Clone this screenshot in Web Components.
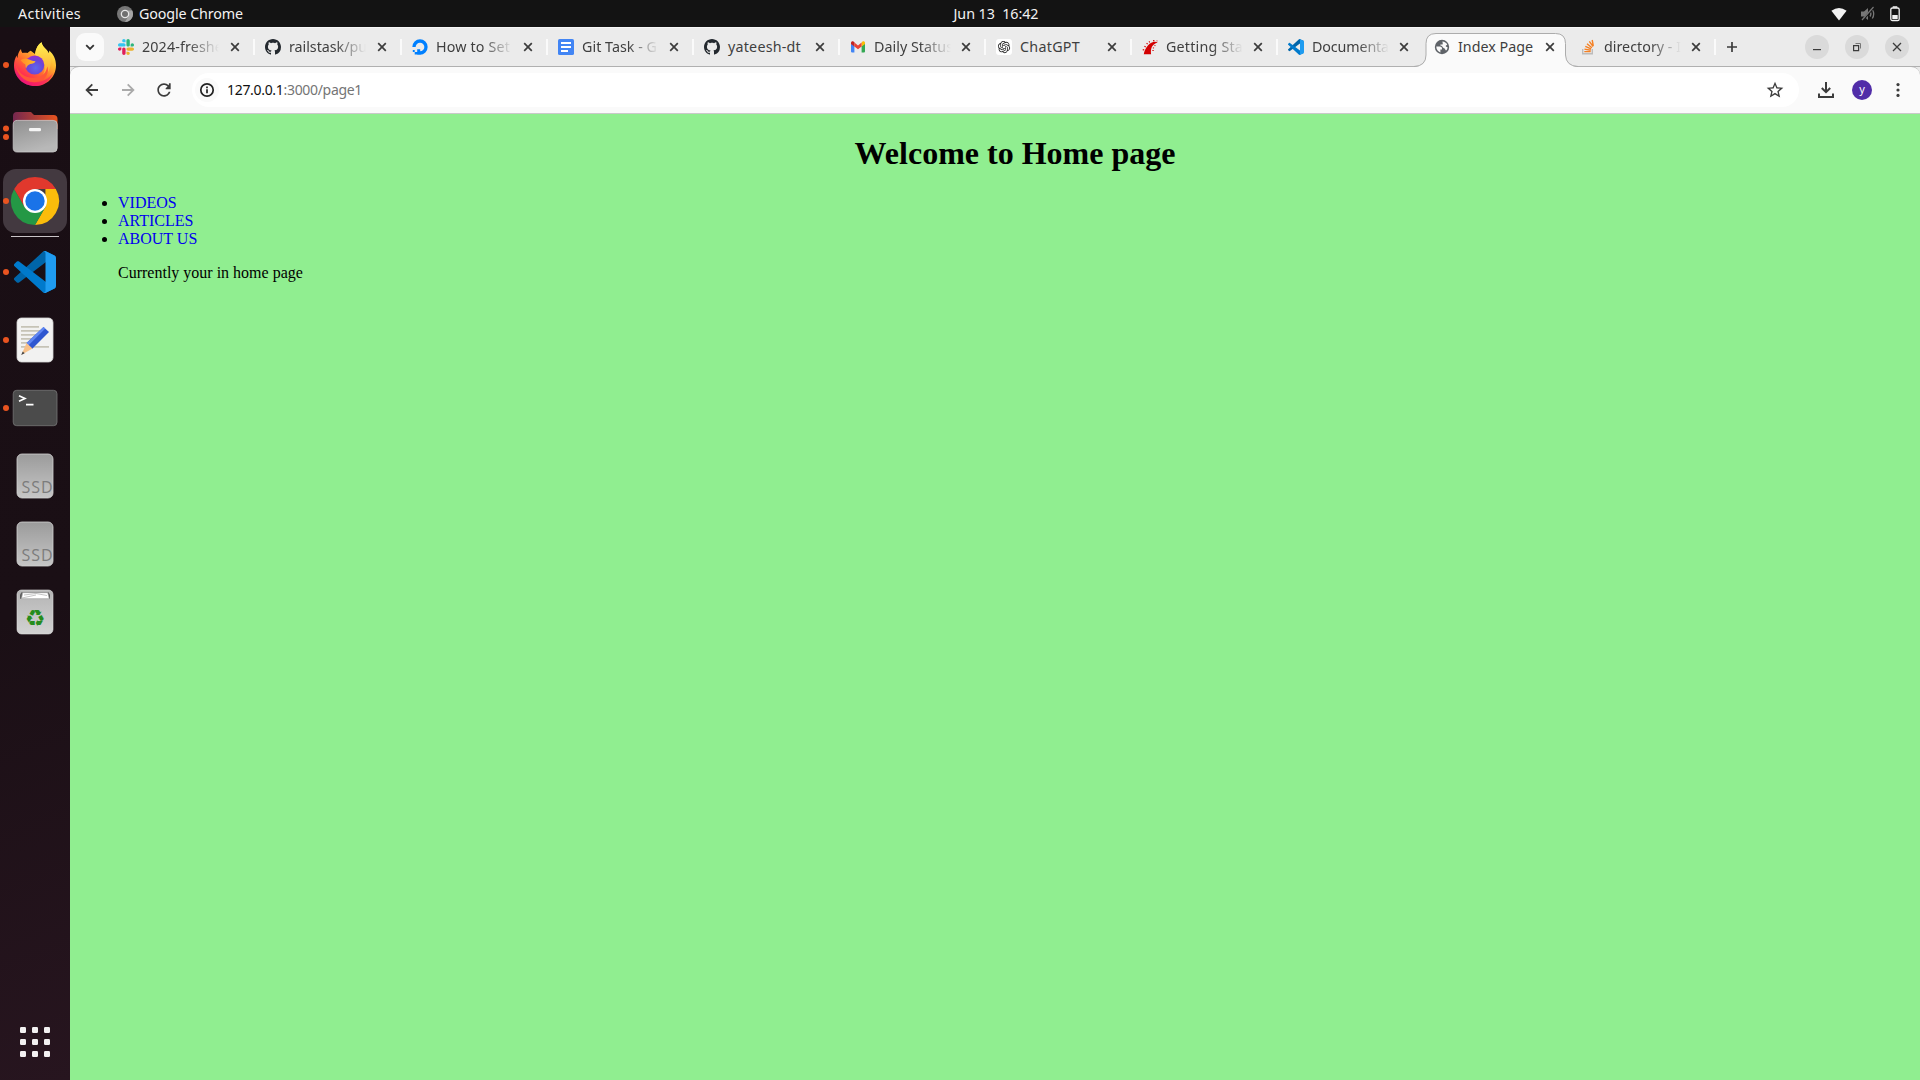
<!DOCTYPE html>
<html lang="en">
<head>
<meta charset="utf-8">
<title>Index Page</title>
<style>
html,body{margin:0;height:100%;overflow:hidden;background:#131313}
</style>
</head>
<body>
<desktop-shell></desktop-shell>
<script>
const UI = '"Noto Sans","Open Sans",sans-serif';

const FAV = {
slack:`<svg viewBox="0 0 122.8 122.8"><path fill="#e01e5a" d="M25.8 77.6c0 7.1-5.8 12.9-12.9 12.9S0 84.700 0 77.600s5.800-12.900 12.900-12.900h12.900v12.900zM32.300 77.600c0-7.100 5.800-12.900 12.900-12.900s12.900 5.800 12.900 12.900v32.300c0 7.100-5.800 12.900-12.900 12.900s-12.900-5.800-12.900-12.900V77.600z"/><path fill="#36c5f0" d="M45.200 25.800c-7.100 0-12.900-5.800-12.900-12.900S38.100 0 45.200 0s12.900 5.800 12.900 12.900v12.900H45.200zM45.200 32.300c7.100 0 12.900 5.800 12.900 12.900s-5.800 12.900-12.900 12.900H12.900C5.800 58.100 0 52.300 0 45.200s5.800-12.900 12.900-12.900h32.300z"/><path fill="#2eb67d" d="M97 45.200c0-7.100 5.800-12.900 12.900-12.900s12.900 5.800 12.900 12.900-5.800 12.900-12.900 12.900H97V45.200zM90.500 45.200c0 7.100-5.800 12.900-12.900 12.900s-12.900-5.800-12.900-12.900V12.900C64.700 5.800 70.500 0 77.600 0s12.900 5.800 12.900 12.900v32.300z"/><path fill="#ecb22e" d="M77.600 97c7.100 0 12.900 5.800 12.900 12.900s-5.800 12.900-12.900 12.900-12.900-5.800-12.900-12.900V97h12.900zM77.600 90.500c-7.100 0-12.900-5.800-12.900-12.900s5.800-12.900 12.900-12.900h32.300c7.100 0 12.900 5.800 12.900 12.900s-5.800 12.900-12.900 12.900H77.600z"/></svg>`,
github:`<svg viewBox="0 0 16 16"><path fill="#24292f" d="M8 0C3.58 0 0 3.58 0 8c0 3.54 2.29 6.53 5.47 7.59.4.07.55-.17.55-.38 0-.19-.01-.82-.01-1.490-2.010.37-2.530-.49-2.690-.94-.09-.23-.48-.94-.82-1.130-.28-.15-.68-.52-.01-.53.63-.01 1.080.58 1.230.82.72 1.210 1.870.87 2.330.66.07-.52.28-.87.51-1.070-1.780-.2-3.640-.89-3.640-3.950 0-.87.31-1.590.82-2.150-.08-.2-.36-1.020.08-2.120 0 0 .67-.21 2.200.82.64-.18 1.320-.27 2-.27.68 0 1.360.09 2 .27 1.530-1.040 2.200-.82 2.200-.82.44 1.100.16 1.920.08 2.120.51.56.82 1.270.82 2.150 0 3.070-1.870 3.750-3.650 3.950.29.25.54.73.54 1.480 0 1.070-.01 1.930-.01 2.200 0 .21.15.46.55.38A8.013 8.013 0 0016 8c0-4.420-3.580-8-8-8z"/></svg>`,
ocean:`<svg viewBox="0 0 16 16"><path d="M2 8A6 6 0 1 1 8 14" fill="none" stroke="#0080ff" stroke-width="3.300"/><path fill="#0080ff" d="M5.200 10.300h3v5.400h-3zM2.700 13h2.500v2.400H2.700zM.8 11h1.900v2H.8z"/></svg>`,
docs:`<svg viewBox="0 0 16 16"><rect width="16" height="16" rx="1.600" fill="#4285f4"/><path stroke="#fff" stroke-width="2" d="M3 4h10M3 8h10M3 12h7"/></svg>`,
gmail:`<svg viewBox="0 0 16 16"><path fill="#4285f4" d="M1 4.500l3.400 2.600V13.500H2.100A1.100 1.100 0 0 1 1 12.400z"/><path fill="#34a853" d="M11.600 7.100L15 4.500v7.900a1.100 1.100 0 0 1-1.100 1.100h-2.300z"/><path fill="#fbbc04" d="M11.600 3.700v3.800L15 4.900V4c0-1.500-1.600-2.100-2.700-1.300z"/><path fill="#ea4335" d="M4.400 7.500V3.600L8 6.400l3.600-2.800v3.900L8 10.200z"/><path fill="#c5221f" d="M1 4v.9l3.400 2.600V3.600l-.7-.9C2.600 1.900 1 2.500 1 4z"/></svg>`,
gpt:`<svg viewBox="0 0 32 32"><rect width="32" height="32" rx="6" fill="#fff"/><path transform="translate(3.800 3.800) scale(1.020)" fill="#222" d="M22.2819 9.8211a5.9847 5.9847 0 0 0-.5157-4.9108 6.0462 6.0462 0 0 0-6.5098-2.9A6.0651 6.0651 0 0 0 4.9807 4.1818a5.9847 5.9847 0 0 0-3.9977 2.9 6.0462 6.0462 0 0 0 .7427 7.0966 5.98 5.98 0 0 0 .511 4.9107 6.051 6.051 0 0 0 6.5146 2.9001A5.9847 5.9847 0 0 0 13.2599 24a6.0557 6.0557 0 0 0 5.7718-4.2058 5.9894 5.9894 0 0 0 3.9977-2.9001 6.0557 6.0557 0 0 0-.7475-7.0729zm-9.022 12.6081a4.4755 4.4755 0 0 1-2.8764-1.0408l.1419-.0804 4.7783-2.7582a.7948.7948 0 0 0 .3927-.6813v-6.7369l2.02 1.1686a.071.071 0 0 1 .038.052v5.5826a4.504 4.504 0 0 1-4.4945 4.4944zm-9.6607-4.1254a4.4708 4.4708 0 0 1-.5346-3.0137l.142.0852 4.783 2.7582a.7712.7712 0 0 0 .7806 0l5.8428-3.3685v2.3324a.0804.0804 0 0 1-.0332.0615L9.74 19.9502a4.4992 4.4992 0 0 1-6.1408-1.6464zM2.3408 7.8956a4.485 4.485 0 0 1 2.3655-1.9728V11.6a.7664.7664 0 0 0 .3879.6765l5.8144 3.3543-2.0201 1.1685a.0757.0757 0 0 1-.071 0l-4.8303-2.7865A4.504 4.504 0 0 1 2.3408 7.872zm16.5963 3.8558L13.1038 8.364 15.1192 7.2a.0757.0757 0 0 1 .071 0l4.8303 2.7913a4.4944 4.4944 0 0 1-.6765 8.1042v-5.6772a.79.79 0 0 0-.407-.667zm2.0107-3.0231l-.142-.0852-4.7735-2.7818a.7759.7759 0 0 0-.7854 0L9.409 9.2297V6.8974a.0662.0662 0 0 1 .0284-.0615l4.8303-2.7866a4.4992 4.4992 0 0 1 6.6802 4.66zM8.3065 12.863l-2.02-1.1638a.0804.0804 0 0 1-.038-.0567V6.0742a4.4992 4.4992 0 0 1 7.3757-3.4537l-.142.0805L8.704 5.459a.7948.7948 0 0 0-.3927.6813zm1.0976-2.3654l2.602-1.4998 2.6069 1.4998v2.9994l-2.5974 1.4997-2.6067-1.4997Z"/></svg>`,
rails:`<svg viewBox="0 0 16 16"><path fill="#d30001" d="M1.800 15.200h7.300C8.300 9.500 10 5.200 15.700 3.500 13 1.700 9 2.900 6.100 6.300 3.500 9.200 2.200 12.300 1.800 15.200z"/><g fill="#d30001"><path d="M.9 10l1.500.6-.4 1L.6 11.200zM2.700 6.700l1.300.9-.6.8-1.300-.8zM5 3.800l1 1-.8.7-1-1zM7.500 2l.7 1.200-.9.500-.7-1.200zM11 1h1.400v1.300l-1.100.1zM14.700 1.200l.9.500-.3.800-.8-.3zM11 8.200l1.200.5-.3.800-1.200-.3zM10.400 11h1.300v1h-1.300zM12.900 5.800l.8.900-.7.600-.8-.8z"/></g></svg>`,
code:`<svg viewBox="0 0 100 100"><path fill="#0065a9" d="M96.461 10.796L75.857.875C73.472-.272 70.622.211 68.750 2.083L1.299 63.583c-1.815 1.654-1.813 4.511.004 6.162l5.510 5.009c1.485 1.350 3.722 1.450 5.321.237L93.361 13.370C96.086 11.303 100 13.246 100 16.667v-.24c0-2.400-1.375-4.590-3.539-5.631z"/><path fill="#007acc" d="M96.461 89.204l-20.604 9.920c-2.385 1.149-5.235.665-7.107-1.207L1.299 36.417c-1.815-1.654-1.813-4.511.004-6.162l5.510-5.009c1.485-1.350 3.722-1.450 5.321-.237L93.361 86.630C96.086 88.697 100 86.754 100 83.333v.24c0 2.400-1.375 4.589-3.539 5.631z"/><path fill="#1f9cf0" d="M75.858 99.126c-2.386 1.148-5.236.663-7.108-1.209C71.056 100.223 75 98.590 75 95.328V4.672c0-3.262-3.944-4.895-6.250-2.589C70.622.211 73.472-.274 75.858.874l20.601 9.907C98.623 11.822 100 14.011 100 16.413v67.174c0 2.402-1.377 4.592-3.541 5.633z"/></svg>`,
globe:`<svg viewBox="0 0 16 16"><circle cx="8" cy="8" r="7.200" fill="#5f6368"/><path fill="#fafafa" d="M2.300 7.600h3.500c1.400 0 2.200.8 2.200 1.900v1h-1.600v2.900C4 12.700 2.200 10.600 2.300 7.600zM8.400 2.400c2.200.1 3.900 1.200 4.800 3.100-.4.800-1.200.8-1.500 1.500.2.900 1 1 1.900 1.200-.1 1.400-.7 2.600-1.500 3.400-.7-.3-.8-1.200-1.300-1.900-.5-.8-1.900-.6-2.200-1.700-.2-1-.9-1-2.200-1.500V5.600h1.500c.9 0 .9-.7.8-1.400z"/></svg>`,
stack:`<svg viewBox="0 0 16 16"><path fill="none" stroke="#bcbbbb" stroke-width="1.400" d="M2.700 10v4.800h9.600V10"/><path stroke="#f48024" stroke-width="1.400" d="M4.300 12.600h6.400M4.450 10.100l6.300 1.200M5.300 7.300l5.800 2.600M7 4.700l4.900 4M9.300 2.400l3.800 5.100M12.200 1l1.100 6"/></svg>`
};

const dot = y => `<circle cx="6" cy="${y}" r="3" fill="#e95420"/>`;
const ssd = `<defs><linearGradient id="s" x2="0" y2="1"><stop stop-color="#9b9b9b"/><stop offset="1" stop-color="#c6c6c6"/></linearGradient></defs><rect x="17" y="12" width="36" height="44" rx="5" fill="url(#s)" stroke="#d2d2d2" stroke-width=".8"/><text x="21.500" y="51" textLength="31" font-family="Open Sans" font-size="16" fill="#7c7c7c">SSD</text>`;
const APP = {
firefox: dot(34)+`<defs><linearGradient id="a" x1=".85" y1=".1" x2=".25" y2=".95"><stop stop-color="#fff44f"/><stop offset=".32" stop-color="#ffb22e"/><stop offset=".6" stop-color="#ff6a2f"/><stop offset=".85" stop-color="#ff2f52"/><stop offset="1" stop-color="#e31587"/></linearGradient><radialGradient id="b" cx=".55" cy=".65" r=".65"><stop stop-color="#5d68ee"/><stop offset=".6" stop-color="#6a45d8"/><stop offset="1" stop-color="#9a2fd0"/></radialGradient><linearGradient id="c" x2="0" y2="1"><stop stop-color="#fff250"/><stop offset="1" stop-color="#ff9d33"/></linearGradient><linearGradient id="d" x1="0" x2="1"><stop stop-color="#ff8a28"/><stop offset="1" stop-color="#ffbd2b"/></linearGradient></defs>
<path fill="url(#a)" d="M21 18c.2 2.300.8 3.200 1.500 4 1.600-.5 3.400-.5 5 0 1.300-1.200 2.400-2 3.300-2.300L35 23c1-5.500 3-9.500 6.500-11.700.6 3.600 3.200 5.500 5.400 8 .7 1 1.200 2.100 1.500 3.200.7-1.200.9-2 .8-3.100C53.500 23 56 28.500 56 34.200 56 46 46.800 55 35 55S14 46 14 34.500c0-3.800 1-7.200 2.600-9.900.2 1.100.5 1.900.9 2.500.1-3.800 1.500-7 3.500-9.100z"/>
<path fill="#f4176b" opacity=".55" d="M15 41c3.200 6 10 10.500 19 10.500 8.500 0 15-4 19-9.500C50 50 43.500 55 35 55c-9.300 0-17-5.500-20-14z"/>
<path fill="url(#c)" d="M41.500 11.300c.6 3.600 3.200 5.500 5.400 8 4.500 5.600 5.100 13 2.400 19.200-1.600 4-5 7.400-9 8.500 5-4.500 6-12 2-17.500-2.600-3.500-7.300-4-7.300-6.500 1-5.500 3-9.500 6.500-11.700z"/>
<circle cx="34.700" cy="34" r="9.600" fill="url(#b)"/>
<path fill="url(#d)" d="M20.500 29c2.200-1.300 4.500-1.500 7-1 2 .2 4.500 2.100 8 2.300-.7 2-3 2.500-5.300 2.800-1.900.7-3.200 2-4.100 4.300-1.200-2.200-.5-4-1.200-4.500-1.500-.4-2.800-1.800-4.400-3.900z"/>
<path fill="#ff5738" d="M15.500 32c1.600 9 8.500 14.600 17.500 14.800 8 .2 13.600-4.800 14.200-11.300 3 7-3.200 15.500-12.700 15.700-10.500.2-18-8-19-19.200z"/>`,
files: dot(29.5)+dot(38)+`<defs><linearGradient id="a" x2="1"><stop stop-color="#74274f"/><stop offset="1" stop-color="#e8541f"/></linearGradient><linearGradient id="b" x2=".4" y2="1"><stop stop-color="#8f8f8f"/><stop offset="1" stop-color="#b8b8b8"/></linearGradient></defs><path fill="url(#a)" d="M13 17a4 4 0 0 1 4-4h14l3 3h19.500a4 4 0 0 1 4 4v10H13z"/><rect x="13.200" y="21.400" width="44" height="31.600" rx="4" fill="url(#b)" stroke="#c9c9c9" stroke-width=".8"/><rect x="29" y="29" width="12" height="3.200" rx="1.300" fill="#f5f5f5"/>`,
chrome:`<rect x="3" y="2" width="64" height="64" rx="13" fill="#433940"/>`+dot(34)+`<path fill="#fbbc0b" d="M55.800 22A24 24 0 0 1 35 58l10.400-18V22z"/><path fill="#249845" d="M14.200 22A24 24 0 0 0 35 58L45.400 40 24.600 40z"/><path fill="#e1382d" d="M14.200 22A24 24 0 0 1 55.800 22H35L24.600 40z"/><circle cx="35" cy="34" r="12" fill="#fff"/><circle cx="35" cy="34" r="9.700" fill="#1a73e8"/>`,
code: dot(34)+`<g transform="translate(14 13) scale(.42)">${FAV.code.replace(/<\/?svg[^>]*>/g,'')}</g>`,
editor: dot(34)+`<rect x="17" y="12" width="36" height="44" rx="4.500" fill="#f2f2f1" stroke="#d5d5d5" stroke-width=".8"/><path stroke="#c6c3b6" stroke-width="1.800" d="M21 20.800h18M21 24.800h21M21 28.800h15M21 32.800h12M21 36.800h8M21 40.800h28"/><path fill="#2f57d0" d="M43.500 21l5.500 5-17 17-5.500-6z"/><path fill="#5f86f2" d="M43.500 21l1.800 1.600-17 17-1.800-2.600z"/><path fill="#f6c089" d="M26.500 37l6 5.500L21.500 48.700z"/><path fill="#444" d="M22.700 45.500l2 1.700-3.500 1.800z"/>`,
term: dot(34)+`<rect x="13.200" y="16.300" width="43.800" height="35.400" rx="3.500" fill="#4b4b4b" stroke="#767676" stroke-width=".8"/><path fill="none" stroke="#fff" stroke-width="1.600" d="M19 21.800l6 2.700-6 2.700M26 30.600h7.500"/>`,
ssd,
trash:`<defs><linearGradient id="a" x2="0" y2="1"><stop stop-color="#b4b4b4"/><stop offset="1" stop-color="#d2d2d2"/></linearGradient></defs><rect x="17" y="12" width="36" height="44" rx="4.500" fill="url(#a)" stroke="#ddd" stroke-width=".6"/><path fill="#5e5e5e" d="M20 20.700v-4l1.500-2.500h27l1.500 2.500v4z"/><path fill="#fff" stroke="#aaa" stroke-width=".6" d="M21.500 20.700l1.200-6h25l1.500 6z"/><path fill="none" stroke="#aaa" stroke-width=".7" d="M24 17l12-1.500 11 2M22 20l14-3"/><text x="35" y="48" text-anchor="middle" font-family="DejaVu Sans" font-size="23" fill="#268c1c">♻</text>`
};

class Base extends HTMLElement{
  constructor(){super();this.attachShadow({mode:'open'});}
  paint(css,html){this.shadowRoot.innerHTML=`<style>:host{box-sizing:border-box}*{box-sizing:border-box}svg{display:block;flex:none}${css}</style>${html}`;}
}

/* Text whose letter spacing is set so that it takes exactly the given width. */
customElements.define('fit-text',class extends Base{
  connectedCallback(){
    this.paint(`:host{display:block;white-space:pre;flex:none}span{display:inline-block}`,`<span><slot></slot></span>`);
    const s=this.shadowRoot.querySelector('span'),w=+this.getAttribute('w');
    s.style.letterSpacing=(w-s.getBoundingClientRect().width)/this.textContent.length+'px';
  }
});

customElements.define('fav-icon',class extends Base{
  connectedCallback(){this.paint(`:host{display:block;width:16px;height:16px;flex:none}svg{width:100%;height:100%}`,FAV[this.getAttribute('name')]);}
});

customElements.define('browser-tab',class extends Base{
  connectedCallback(){
    const on=this.hasAttribute('active'),clip=this.hasAttribute('clip');
    this.paint(`:host{display:flex;align-items:center;position:relative;width:146px;height:40px;flex:none;color:#3f3f3f;font:14.300px ${UI}}
    .title{width:82px;margin-left:8px;z-index:1;line-height:24px;${clip?'-webkit-mask-image:linear-gradient(90deg,#000 46px,transparent 77px)':''}}
    fav-icon{margin-left:12px;z-index:1}
    .x{margin-left:var(--x,2px);z-index:1}
    .sep{width:2px;height:16px;background:#fafafa;margin-left:auto;margin-right:-2px}
    .shape{position:absolute;left:-8px;top:6px}`,
    `${on?`<svg class="shape" width="165" height="34"><path fill="#fafafa" d="M0 34Q12 33.500 12 22V10.500Q12 .5 22 .5H141.500Q151.500 .5 151.500 10.500V22Q152 33.500 164 34Z"/><path fill="none" stroke="#acacac" d="M0 33.500Q12 33 12 22V10.500Q12 .5 22 .5H141.500Q151.500 .5 151.500 10.500V22Q152 33 164 33.500"/></svg>`:''}
    <fav-icon name="${this.getAttribute('icon')}"></fav-icon><div class="title"><fit-text w="${this.getAttribute('w')}">${this.textContent}</fit-text></div>
    <svg class="x" width="16" height="16"><path stroke="#3c3c3c" stroke-width="1.700" d="M4.200 4.200l7.600 7.600M11.800 4.200l-7.600 7.600"/></svg>
    ${this.hasAttribute('nosep')?'':'<i class="sep"></i>'}`);
  }
});

customElements.define('tab-strip',class extends Base{
  connectedCallback(){
    this.paint(`:host{display:flex;align-items:center;height:40px;background:#ebebeb;box-shadow:inset 0 1px #f6f6f6,inset 0 -1px #b0b0b0}
    .search{width:28px;height:28px;border-radius:9px;background:#fafafa;margin:0 2px 0 6px;display:grid;place-items:center;flex:none}
    .wide{width:147px;--x:3px}
    .plus{margin-left:12px}
    .win{display:flex;gap:16px;margin-left:auto;margin-right:11px}
    .win span{width:24px;height:24px;border-radius:50%;background:#dadada}`,
    `<div class="search"><svg width="12" height="12"><path fill="none" stroke="#333" stroke-width="1.800" d="M2.200 4.200L6 8l3.800-3.800"/></svg></div>
    <browser-tab icon="slack" w="81" clip class="wide">2024-freshe</browser-tab>
    <browser-tab icon="github" w="78" clip class="wide">railstask/pu</browser-tab>
    <browser-tab icon="ocean" w="74" clip>How to Set</browser-tab>
    <browser-tab icon="docs" w="75" clip>Git Task - G</browser-tab>
    <browser-tab icon="github" w="73">yateesh-dt</browser-tab>
    <browser-tab icon="gmail" w="79" clip>Daily Status</browser-tab>
    <browser-tab icon="gpt" w="60">ChatGPT</browser-tab>
    <browser-tab icon="rails" w="77" clip>Getting Sta</browser-tab>
    <browser-tab icon="code" w="77" clip nosep>Documenta</browser-tab>
    <browser-tab icon="globe" w="75" active nosep>Index Page</browser-tab>
    <browser-tab icon="stack" w="77" clip>directory - I</browser-tab>
    <svg class="plus" width="12" height="12"><path stroke="#3c3c3c" stroke-width="1.700" d="M6 1v10M1 6h10"/></svg>
    <div class="win"><span><svg width="24" height="24"><path stroke="#3c3c3c" stroke-width="1.200" d="M8 14.600h8"/></svg></span><span><svg width="24" height="24"><path fill="none" stroke="#3c3c3c" stroke-width="1.200" d="M8.600 10.600h5v5h-5z"/><path fill="none" stroke="#777" d="M10.500 8.500h5v5"/></svg></span><span><svg width="24" height="24"><path stroke="#3c3c3c" stroke-width="1.300" d="M8 8l8 8M16 8l-8 8"/></svg></span></div>`);
  }
});

customElements.define('tool-bar',class extends Base{
  connectedCallback(){
    this.paint(`:host{display:flex;align-items:center;height:48px;background:#fafafa;border:solid #b0b0b0;border-width:1px 0 0;border-radius:9px 9px 0 0;box-shadow:inset 0 -1px #c9c9c9;padding:0 12px 1px 12px}
    .nav{display:flex;gap:16px}
    .omni{display:flex;align-items:center;width:1610px;height:34px;border-radius:17px;background:#fff;margin-left:18px;padding:0 14px 0 3px;font:14px ${UI};color:#757575}
    .info{width:24px;height:24px;border-radius:50%;background:#fafafa;display:grid;place-items:center;margin-right:8px}
    b{font-weight:400;color:#111;display:block}
    fit-text{line-height:18px;padding-bottom:1px}
    .star{margin-left:auto}
    .av{width:20px;height:20px;border-radius:50%;background:#512da8;color:#fff;font:11px/18px ${UI};text-align:center;margin:0 16px 0 17px}
    .dl{margin-left:18px}`,
    `<div class="nav"><svg width="20" height="20" viewBox="0 0 20 20"><path fill="none" stroke="#3c3c3c" stroke-width="1.800" d="M16 10H5M10.300 4.300L4.600 10l5.700 5.700"/></svg>
    <svg width="20" height="20" viewBox="0 0 20 20"><path fill="none" stroke="#aaa" stroke-width="1.800" d="M4 10h11M9.700 4.300l5.700 5.700-5.700 5.700"/></svg>
    <svg width="20" height="20" viewBox="0 0 24 24"><path fill="#3c3c3c" d="M17.650 6.350C16.200 4.900 14.210 4 12 4c-4.420 0-7.990 3.580-7.990 8s3.570 8 7.990 8c3.730 0 6.840-2.550 7.730-6h-2.080c-.82 2.330-3.040 4-5.650 4-3.310 0-6-2.690-6-6s2.690-6 6-6c1.660 0 3.140.69 4.220 1.780L14 10v1h6V4h-2z"/></svg></div>
    <div class="omni"><div class="info"><svg width="16" height="16"><circle cx="8" cy="8" r="6.200" fill="none" stroke="#222" stroke-width="1.700"/><path stroke="#222" stroke-width="1.700" d="M8 7.300v4M8 4.600v1.600"/></svg></div>
    <b><fit-text w="56.500">127.0.0.1</fit-text></b><fit-text w="78.500">:3000/page1</fit-text>
    <svg class="star" width="20" height="20" viewBox="0 0 24 24"><path fill="#3c3c3c" d="M22 9.240l-7.190-.62L12 2 9.190 8.630 2 9.240l5.460 4.730L5.820 21 12 17.270 18.180 21l-1.630-7.030L22 9.240zM12 15.400l-3.760 2.270 1-4.280-3.320-2.880 4.380-.38L12 6.100l1.710 4.040 4.380.38-3.320 2.880 1 4.280L12 15.400z"/></svg></div>
    <svg class="dl" width="18" height="18"><path fill="none" stroke="#3c3c3c" stroke-width="2" d="M9 1v9.500M4.800 7L9 11.200 13.200 7M2 12.500V16h14v-3.500"/></svg>
    <div class="av">y</div>
    <svg width="20" height="20"><g fill="#3c3c3c"><circle cx="10" cy="4.600" r="1.600"/><circle cx="10" cy="10" r="1.600"/><circle cx="10" cy="15.400" r="1.600"/></g></svg>`);
  }
});

customElements.define('web-page',class extends Base{
  connectedCallback(){
    this.paint(`:host{display:block;flex:1;background:#90ee90;padding:0 8px;font:16px "Liberation Serif",serif;color:#000}
    ul{margin:0;padding:.1px 0 0 40px}h1{font-size:32px;margin:21.400px 0;text-align:center}a{color:#00e}p{margin:16px 0}`,
    `<ul><h1>Welcome to Home page</h1><li><a>VIDEOS</a></li><li><a>ARTICLES</a></li><li><a>ABOUT US</a></li><p>Currently your in home page</p></ul>`);
  }
});

customElements.define('dock-item',class extends Base{
  connectedCallback(){this.paint(`:host{display:block;height:68px;flex:none}`,`<svg width="70" height="68" viewBox="0 0 70 68">${APP[this.getAttribute('app')]}</svg>`);}
});

customElements.define('app-dock',class extends Base{
  connectedCallback(){
    let g='';for(const y of[0,12,24])for(const x of[0,12,24])g+=`<rect x="${x}" y="${y}" width="6" height="6" rx="1.200" fill="#f2f0f1"/>`;
    this.paint(`:host{display:flex;flex-direction:column;width:70px;padding-top:4px;background:linear-gradient(160deg,#190e14 0%,#1a0f15 55%,#27151f 100%)}
    hr{width:48px;height:1px;border:0;background:#c9c4c7;margin:1px 11px;flex:none}
    .grid{margin:auto 0 23px 20px}`,
    ['firefox','files','chrome'].map(a=>`<dock-item app="${a}"></dock-item>`).join('')+'<hr>'+
    ['code','editor','term','ssd','ssd','trash'].map(a=>`<dock-item app="${a}"></dock-item>`).join('')+
    `<svg class="grid" width="30" height="30">${g}</svg>`);
  }
});

customElements.define('top-bar',class extends Base{
  connectedCallback(){
    this.paint(`:host{display:grid;grid-template-columns:1fr auto 1fr;align-items:center;height:27px;background:#131313;color:#f2f2f2;font:14.300px/26px ${UI}}
    .l,.r{display:flex;align-items:center}.l{padding-left:18px}.g{margin:0 6px 0 36px}.mid{padding-left:72px}
    .r{justify-content:flex-end;padding-right:19px;gap:12px}`,
    `<div class="l"><fit-text w="63">Activities</fit-text><svg class="g" width="16" height="16"><circle cx="8" cy="8" r="8" fill="#777"/><path fill="#a5a5a5" d="M8 4.500h7.200A8 8 0 0 1 8 16l3.500-6z"/><circle cx="8" cy="8" r="4.300" fill="#e8e8e8"/><circle cx="8" cy="8" r="3" fill="#707070"/></svg><fit-text w="104">Google Chrome</fit-text></div>
    <div class="mid"><fit-text w="85">Jun 13  16:42</fit-text></div>
    <div class="r"><svg width="16" height="16"><path fill="#f2f2f2" d="M8 14.500L.4 4.800Q8-1 15.600 4.800z"/></svg>
    <svg width="18" height="16"><path fill="#777" d="M2 5.500h3L9 2v12l-4-3.500H2z"/><path fill="none" stroke="#777" stroke-width="1.300" d="M11 5.500q1.800 2.500 0 5M13.300 3.500q2.800 4.500 0 9"/><path stroke="#131313" stroke-width="2" d="M3 15L15 1"/><path stroke="#777" stroke-width="1.200" d="M3 14L14.500 1"/></svg>
    <svg width="12" height="16"><rect x="1.800" y="2" width="8.400" height="12.600" rx="1.600" fill="none" stroke="#f2f2f2" stroke-width="1.300"/><path fill="#f2f2f2" d="M3.700.3h4.600v1.500H3.700zM3.300 9h5.400v4.200H3.300z"/></svg></div>`);
  }
});

customElements.define('desktop-shell',class extends Base{
  connectedCallback(){
    this.paint(`:host{display:flex;flex-direction:column;width:1920px;height:1080px}
    .row{display:flex;flex:1;min-height:0}.win{display:flex;flex-direction:column;width:1850px;background:#ebebeb}tool-bar{margin-top:-1px;flex:none}tab-strip{flex:none;position:relative}`,
    `<top-bar></top-bar><div class="row"><app-dock></app-dock><div class="win"><tab-strip></tab-strip><tool-bar></tool-bar><web-page></web-page></div></div>`);
  }
});
</script>
</body>
</html>
